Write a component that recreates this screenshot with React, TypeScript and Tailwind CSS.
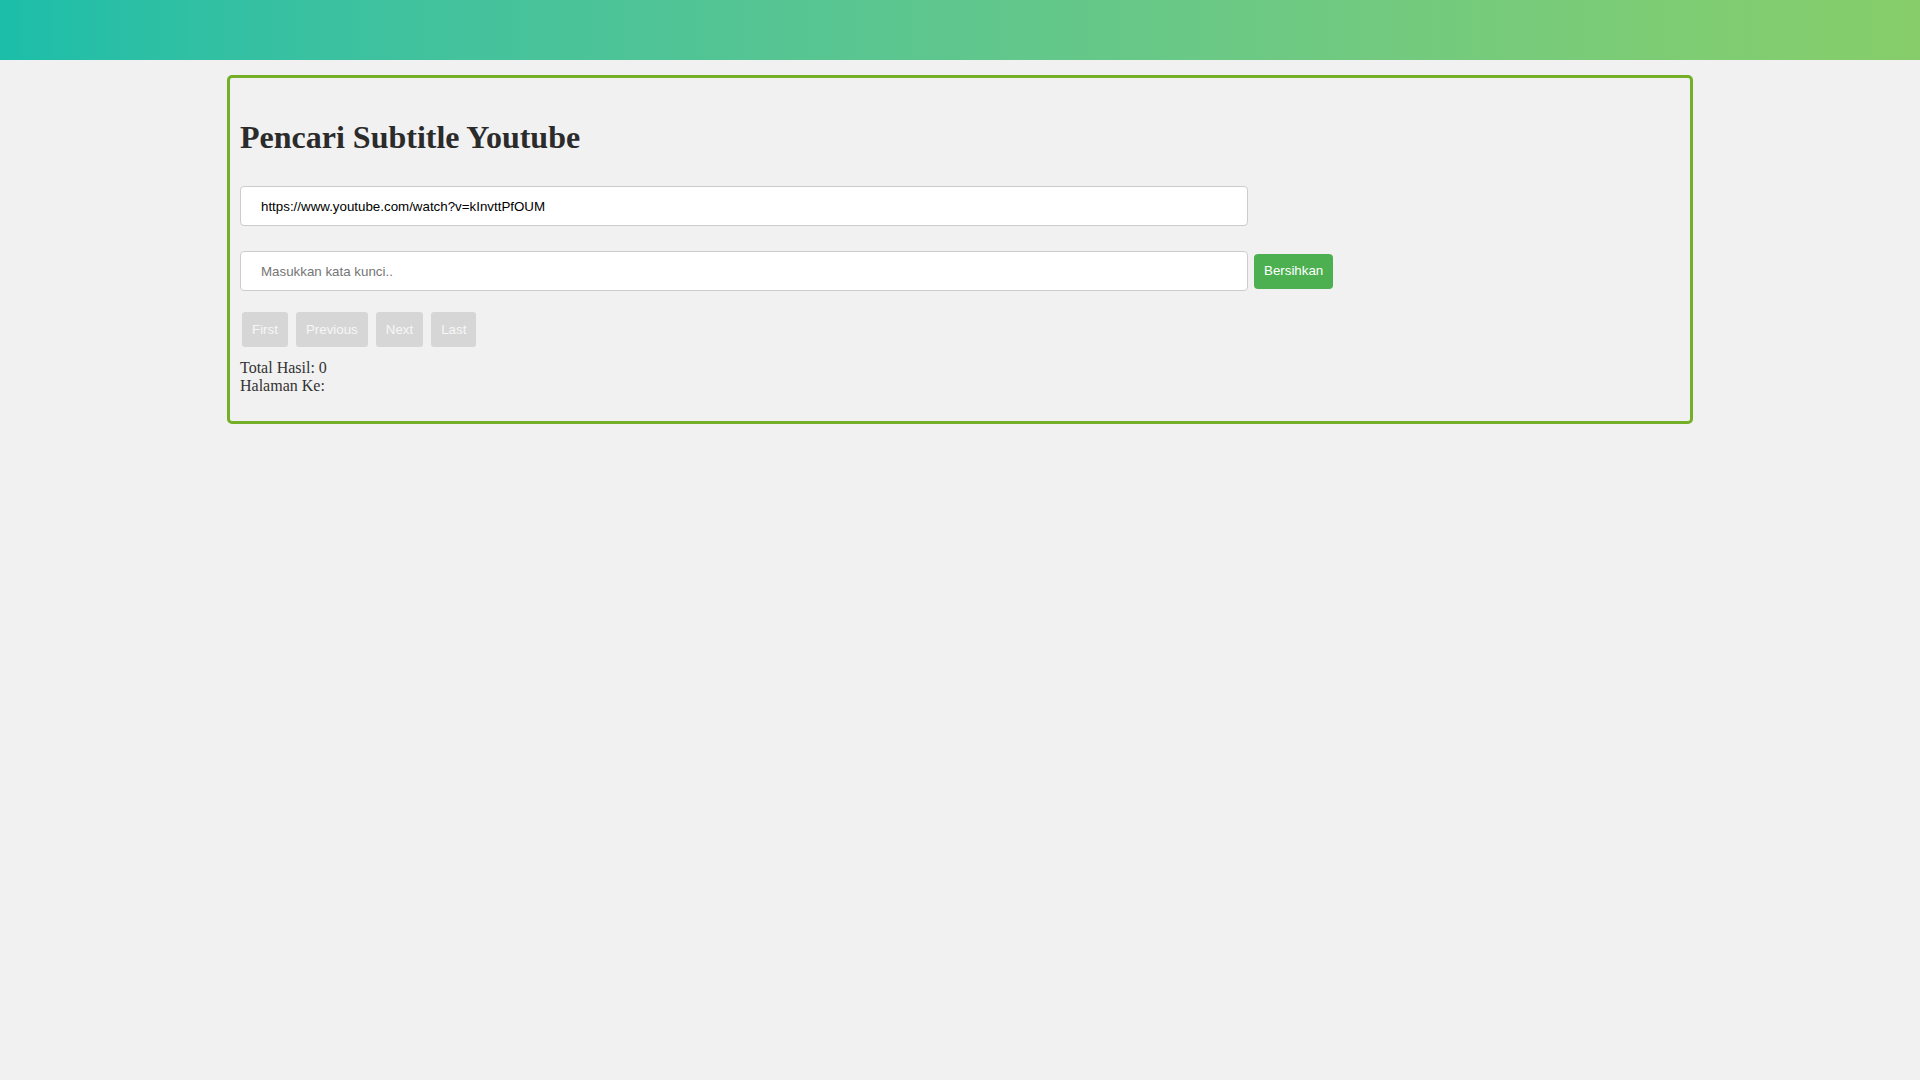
// Pencari Subtitle Youtube - search page

const pageButtons = ['First', 'Previous', 'Next', 'Last'];

const App = () => {
  return (
    <div className="min-h-screen bg-[#f1f1f1] font-['Liberation_Serif',serif] text-[#2b2b2b]">
      {/* top gradient bar */}
      <div className="h-[60px] w-full bg-gradient-to-r from-[#1bbea9] to-[#87ce6a]" />

      <div className="mx-auto mt-[15px] w-[1466px] rounded-[5px] border-[3px] border-[#74af27] px-[10px] pt-[41px] pb-[25px]">
        <h1 className="text-[32px] font-bold leading-[37px]">Pencari Subtitle Youtube</h1>

        <input
          type="text"
          defaultValue="https://www.youtube.com/watch?v=kInvttPfOUM"
          className="mt-[30px] block h-[40px] w-[70%] rounded-[4px] border border-[#cccccc] bg-white pl-[20px] font-['Liberation_Sans',Arial,sans-serif] text-[13.33px] text-black outline-none"
        />

        <div className="mt-[25px] flex items-center">
          <input
            type="text"
            placeholder="Masukkan kata kunci.."
            className="block h-[40px] w-[70%] rounded-[4px] border border-[#cccccc] bg-white pl-[20px] font-['Liberation_Sans',Arial,sans-serif] text-[13.33px] text-black outline-none placeholder:text-[#757575]"
          />
          <button className="ml-[6px] h-[35px] rounded-[4px] bg-[#4caf50] px-[10px] font-['Liberation_Sans',Arial,sans-serif] text-[13.33px] text-white">
            Bersihkan
          </button>
        </div>

        <div className="mt-[21px] ml-[2px] flex gap-[8px]">
          {pageButtons.map((label) => (
            <button
              key={label}
              disabled
              className="h-[35px] rounded-[3px] bg-[#d6d6d6] px-[10px] font-['Liberation_Sans',Arial,sans-serif] text-[13.33px] text-[#f7f7f7]"
            >
              {label}
            </button>
          ))}
        </div>

        <div className="mt-[12px] text-[16px] leading-[18.4px] text-[#333333]">
          <div>Total Hasil: 0</div>
          <div>Halaman Ke: </div>
        </div>
      </div>
    </div>
  );
};

export default App;
